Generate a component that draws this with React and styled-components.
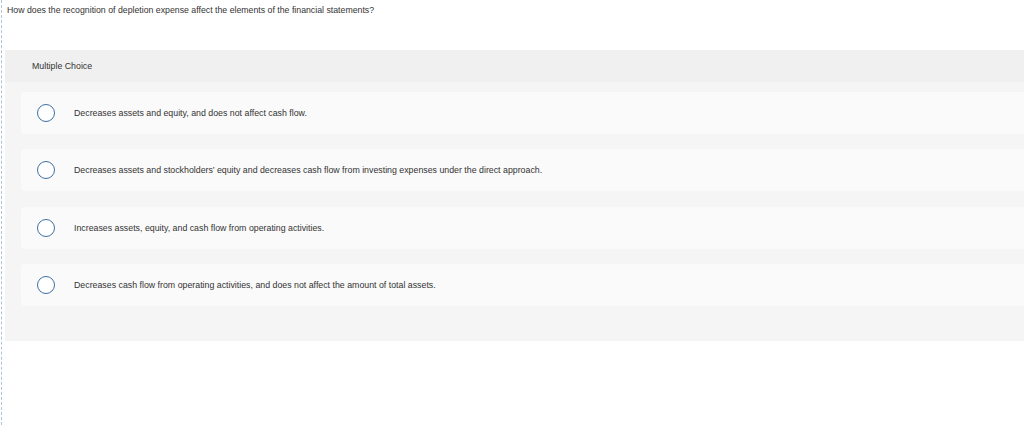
import React from "react";
import styled, { createGlobalStyle } from "styled-components";

const GlobalStyle = createGlobalStyle`
  html, body {
    margin: 0;
    padding: 0;
    background: #fff;
  }
  body {
    font-family: "Liberation Sans", Arial, sans-serif;
    color: #333;
  }
`;

// ─── layout ──────────────────────────────────────────────

const Page = styled.div`
  margin-left: 1px;
  border-left: 1px dashed #b3c2d6;
  min-height: 100vh;
  padding-left: 3px;
  box-sizing: border-box;
`;

const Question = styled.p`
  margin: 0;
  height: 50px;
  padding: 5px 0 0 2px;
  box-sizing: border-box;
  font-size: 8.75px;
  line-height: 11px;
  color: #333;
`;

const Panel = styled.section`
  background: #f5f5f5;
  padding-bottom: 35px;
`;

const PanelHeader = styled.div`
  height: 32px;
  display: flex;
  align-items: center;
  padding-left: 27px;
  background: #f0f0f0;
  font-size: 8.8px;
  color: #333;
`;

const OptionList = styled.div`
  display: flex;
  flex-direction: column;
  gap: 15.3px;
  padding: 10px 0 0 16px;
`;

// ─── option ──────────────────────────────────────────────

const Option = styled.label`
  height: 42px;
  display: flex;
  align-items: center;
  padding-left: 16px;
  background: #fafafa;
  border-radius: 4px 0 0 4px;
  cursor: pointer;
`;

const Radio = styled.span`
  width: 18px;
  height: 18px;
  box-sizing: border-box;
  border: 1.5px solid #3d6fa3;
  border-radius: 50%;
  background: #fff;
  flex-shrink: 0;
`;

const OptionText = styled.span`
  margin-left: 19px;
  font-size: 8.8px;
  color: #333;
`;

const choices = [
  "Decreases assets and equity, and does not affect cash flow.",
  "Decreases assets and stockholders’ equity and decreases cash flow from investing expenses under the direct approach.",
  "Increases assets, equity, and cash flow from operating activities.",
  "Decreases cash flow from operating activities, and does not affect the amount of total assets.",
];

export default function App() {
  return (
    <>
      <GlobalStyle />
      <Page>
        <Question>
          How does the recognition of depletion expense affect the elements of the financial statements?
        </Question>
        <Panel>
          <PanelHeader>Multiple Choice</PanelHeader>
          <OptionList>
            {choices.map(c => (
              <Option key={c}>
                <Radio />
                <OptionText>{c}</OptionText>
              </Option>
            ))}
          </OptionList>
        </Panel>
      </Page>
    </>
  );
}
